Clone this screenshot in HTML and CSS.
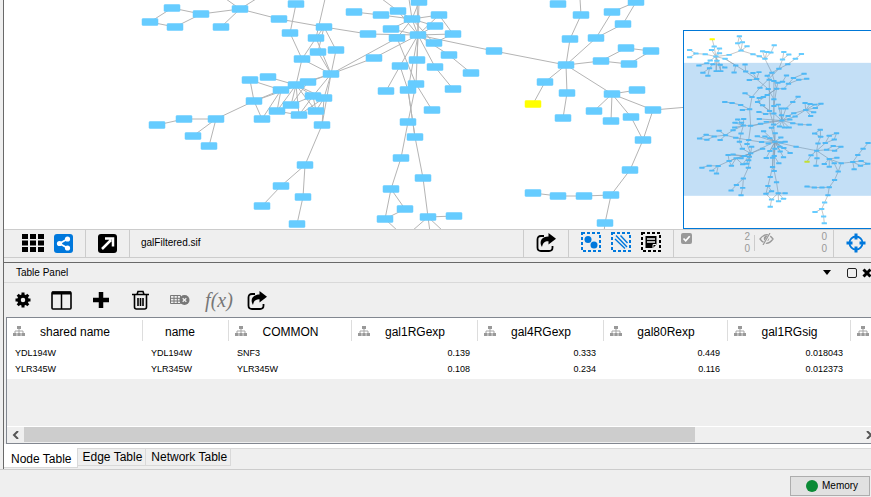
FILE: index.html
```html
<!DOCTYPE html>
<html lang="en">
<head>
<meta charset="utf-8">
<title>galFiltered.sif</title>
<link rel="stylesheet" href="styles.css">
</head>
<body>
<svg class="defs" aria-hidden="true">
  <symbol id="i-tree" viewBox="0 0 12 12"><path d="M6 3v7M2 8V6h8v2" fill="none" stroke="#a5a5a5"/><path d="M4 1h4v3H4zM0 8h3.6v3H0zM4.3 8h3.4v3H4.300zM8.400 8H12v3H8.400z" fill="#999"/></symbol>
  <symbol id="i-share" viewBox="0 0 20 19"><path d="M8 3H5Q1.500 3 1.500 6.500v8Q1.500 18 5 18h8q3.500 0 3.500-3.500V13" fill="none" stroke="currentColor" stroke-width="1.800"/><path d="M12.500 0 20 5.800l-7.500 5.700V8.200C9 8 7 9.500 6 14 2.500 8 6 3.500 12.500 3.400z" fill="currentColor"/></symbol>
</svg>

<main class="app">
  <section class="network" aria-label="Network view">
    <svg class="canvas" id="canvas"></svg>
    <div class="birdseye">
      <svg class="birdseye-map" id="birdseye" viewBox="11 16 564 594" preserveAspectRatio="xMinYMin slice"></svg>
    </div>
  </section>

  <div class="viewbar">
    <div class="group group-views">
      <button type="button" aria-label="Grid view"><svg width="22" height="18" viewBox="0 0 22 18"><path d="M0 0h6v5H0zM8 0h6v5H8zM16 0h6v5h-6zM0 6.500h6v5H0zM8 6.500h6v5H8zM16 6.500h6v5h-6zM0 13h6v5H0zM8 13h6v5H8zM16 13h6v5h-6z"/></svg></button>
      <button type="button" aria-label="Show view"><svg width="19" height="19" viewBox="0 0 19 19"><rect width="19" height="19" rx="3" fill="#0078dc"/><path d="M13.500 5 5.500 9.500l8 4.500" fill="none" stroke="#fff" stroke-width="1.800"/><g fill="#fff"><circle cx="13.500" cy="5" r="2.600"/><circle cx="5.500" cy="9.500" r="2.600"/><circle cx="13.500" cy="14" r="2.600"/></g></svg></button>
    </div>
    <div class="group group-detach">
      <button type="button" aria-label="Detach view"><svg width="19" height="19" viewBox="0 0 19 19"><rect width="19" height="19" rx="3"/><path d="M4 15 13 6M7 4.500h8v8" fill="none" stroke="#fff" stroke-width="2.500"/></svg></button>
    </div>
    <div class="group group-name">galFiltered.sif</div>
    <div class="group group-export">
      <button type="button" aria-label="Export"><svg width="20" height="19"><use href="#i-share"/></svg></button>
    </div>
    <div class="group group-select">
      <button type="button" aria-label="Node selection"><svg width="20" height="20" viewBox="0 0 20 20"><rect x="1" y="1" width="18" height="18" fill="none" stroke="#0078dc" stroke-width="2" stroke-dasharray="3 2"/><circle cx="7" cy="7.500" r="3.500" fill="#0078dc"/><circle cx="13" cy="13" r="3.500" fill="#0078dc"/></svg></button>
      <button type="button" aria-label="Edge selection"><svg width="20" height="20" viewBox="0 0 20 20"><rect x="1" y="1" width="18" height="18" fill="none" stroke="#0078dc" stroke-width="2" stroke-dasharray="3 2"/><path d="M4 7l10 9.500M5 3.500 16 15M9.500 3.500l7 7.500" fill="none" stroke="#0078dc" stroke-width="1.400"/></svg></button>
      <button type="button" aria-label="Annotation selection"><svg width="20" height="20" viewBox="0 0 20 20"><rect x="1" y="1" width="18" height="18" fill="none" stroke="#000" stroke-width="2" stroke-dasharray="3 2"/><path d="M4.500 4h11v8.500L12 16H4.500z"/><path d="M6 7h8M6 10h8" stroke="#efefef" stroke-width="1.300"/><path d="M12 16v-3.500h3.500" fill="none" stroke="#efefef"/></svg></button>
    </div>
    <div class="group group-counts">
      <svg class="count-icon" width="11" height="11" viewBox="0 0 11 11"><rect width="11" height="11" rx="2" fill="#999"/><path d="m2.500 5.500 2.200 2.300 4-4.500" fill="none" stroke="#fff" stroke-width="1.700"/></svg>
      <div class="count"><span>2</span><span>0</span></div>
      <i class="rule"></i>
      <svg class="count-icon" width="15" height="12" viewBox="0 0 15 12"><path d="M1 6q6.500-8.500 13 0-6.500 8.500-13 0z" fill="none" stroke="#999" stroke-width="1.300"/><circle cx="7.500" cy="5.500" r="2.700" fill="#999"/><path d="m11.500 0-7 12" stroke="#efefef" stroke-width="2.500"/><path d="M11 0 4 12" stroke="#999" stroke-width="1.200"/></svg>
      <div class="count count-hidden"><span>0</span><span>0</span></div>
    </div>
    <div class="group group-fit">
      <button type="button" aria-label="Birds eye view"><svg width="20" height="20" viewBox="0 0 20 20"><circle cx="10" cy="10" r="6.500" fill="none" stroke="#0078dc" stroke-width="1.800"/><path d="M10 .500v6M10 13.500v6M.500 10h6M13.500 10h6" stroke="#0078dc" stroke-width="3"/></svg></button>
    </div>
  </div>

  <section class="panel">
    <header class="panel-title">
      <h2>Table Panel</h2>
      <button type="button" aria-label="Menu"><svg width="8" height="5"><path d="M0 0h8L4 5z"/></svg></button>
      <button type="button" class="float" aria-label="Float"><svg width="10" height="10"><rect x=".5" y=".5" width="9" height="9" rx="1.500" fill="none" stroke="#222"/></svg></button>
      <button type="button" class="close" aria-label="Close"><svg width="10" height="10"><path d="m1.500 1.500 7 7m0-7-7 7" stroke="#000" stroke-width="3"/></svg></button>
    </header>

    <div class="tools">
      <button type="button" class="t-gear" aria-label="Table options"><svg width="16" height="16" viewBox="-8 -8 16 16"><circle r="4" fill="none" stroke="#000" stroke-width="3.500"/><path d="M0-7.500v3M0 4.500v3M-7.500 0h3M4.500 0h3M-5.300-5.300l2 2M5.300 5.300l-2-2M-5.300 5.300l2-2M5.300-5.300l-2 2" stroke="#000" stroke-width="3"/></svg></button>
      <button type="button" class="t-cols" aria-label="Show columns"><svg width="21" height="19" viewBox="0 0 21 19"><rect x="1" y="1" width="19" height="17" rx="1" fill="none" stroke="#000" stroke-width="1.600"/><path d="M1 2h19" stroke="#000" stroke-width="3"/><path d="M10.500 2v16" stroke="#000" stroke-width="1.500"/></svg></button>
      <button type="button" class="t-add" aria-label="Create column"><svg width="18" height="18"><path d="M9 1v16M1 9h16" stroke="#000" stroke-width="4.500"/></svg></button>
      <button type="button" class="t-trash" aria-label="Delete columns"><svg width="17" height="20" viewBox="0 0 17 20" fill="none" stroke="#000" stroke-width="1.600"><path d="M0 4.500h17M5 4.500l1-3h5l1 3M2.500 5v12q0 2 2 2h8q2 0 2-2V5M6 8v8M8.500 8v8M11 8v8"/></svg></button>
      <button type="button" class="t-table" aria-label="Delete table"><svg width="20" height="10" viewBox="0 0 20 10"><path d="M.5.500h10v8H.500zM.500 3.300h10M.500 6h10M4 .500v8M7.300.500v8" fill="none" stroke="#777"/><circle cx="14.500" cy="5" r="5" fill="#777"/><path d="m12.700 3.200 3.600 3.600m0-3.600-3.600 3.600" stroke="#efefef" stroke-width="1.300"/></svg></button>
      <button type="button" class="t-fx" aria-label="Function builder">f(x)</button>
      <button type="button" class="t-export" aria-label="Export table"><svg width="20" height="19"><use href="#i-share"/></svg></button>
    </div>

    <div class="grid">
      <table>
        <colgroup><col class="c-shared"><col class="c-name"><col class="c-common"><col class="c-exp"><col class="c-exp"><col class="c-r80"><col class="c-sig"><col class="c-rest"></colgroup>
        <thead>
          <tr>
            <th><svg><use href="#i-tree"/></svg>shared name</th>
            <th class="plain">name</th>
            <th><svg><use href="#i-tree"/></svg>COMMON</th>
            <th><svg><use href="#i-tree"/></svg>gal1RGexp</th>
            <th><svg><use href="#i-tree"/></svg>gal4RGexp</th>
            <th><svg><use href="#i-tree"/></svg>gal80Rexp</th>
            <th><svg><use href="#i-tree"/></svg>gal1RGsig</th>
            <th><svg><use href="#i-tree"/></svg></th>
          </tr>
        </thead>
        <tbody>
          <tr><td>YDL194W</td><td>YDL194W</td><td>SNF3</td><td class="num">0.139</td><td class="num">0.333</td><td class="num">0.449</td><td class="num">0.018043</td><td></td></tr>
          <tr><td>YLR345W</td><td>YLR345W</td><td>YLR345W</td><td class="num">0.108</td><td class="num">0.234</td><td class="num">0.116</td><td class="num">0.012373</td><td></td></tr>
        </tbody>
      </table>
      <div class="scroll">
        <svg width="7" height="8"><path d="M6 0 2 4l4 4" fill="none" stroke="#555" stroke-width="2"/></svg>
        <div class="track"><div class="thumb"></div></div>
        <svg class="next" width="7" height="8"><path d="m1 0 4 4-4 4" fill="none" stroke="#555" stroke-width="2"/></svg>
      </div>
    </div>

    <nav class="tabs">
      <button type="button" class="tab active">Node Table</button>
      <button type="button" class="tab">Edge Table</button>
      <button type="button" class="tab">Network Table</button>
    </nav>
  </section>
</main>

<footer class="status">
  <button type="button" class="memory"><i class="dot"></i>Memory</button>
</footer>
<script src="network.js"></script>
</body>
</html>
```
FILE: styles.css
```css
* { box-sizing: border-box; }
body {
  margin: 0;
  height: 100vh;
  display: flex;
  flex-direction: column;
  overflow: hidden;
  background: #efefef;
  color: #000;
  font: 10px/16px "Liberation Sans", Arial, sans-serif;
}
button {
  display: block;
  margin: 0;
  padding: 0;
  border: 0;
  background: none;
  color: inherit;
  font: inherit;
}
svg { display: block; }
.defs { position: absolute; width: 0; height: 0; }

.app {
  flex: 1;
  min-height: 0;
  display: flex;
  flex-direction: column;
  margin-left: 3px;
  border-left: 1px solid #696969;
}

/* network canvas and overview */
.network { position: relative; flex: 1; min-height: 0; overflow: hidden; background: #fff; }
.canvas { width: 100%; height: 100%; }
.edge { stroke: #b4b4b4; stroke-width: 1; fill: none; }
.node { fill: #66ccff; stroke: #66ccff; stroke-opacity: .5; }
.node.selected { fill: #ffff00; stroke: #ffff00; }
.birdseye {
  position: absolute;
  right: 0;
  bottom: 0;
  width: 188px;
  height: 199px;
  background: #fff;
  border: 1px solid #0078d7;
  border-right: 0;
}
.birdseye-map { width: 100%; height: 100%; }
.birdseye .edge { stroke: #aaa; stroke-width: 2; }
.birdseye .node { stroke: none; }
.viewport { fill: #0078d7; fill-opacity: .235; }

/* view toolbar */
.viewbar {
  display: flex;
  height: 29px;
  border-top: 1px solid #ccc;
  border-bottom: 1px solid #ccc;
}
.group { display: flex; align-items: center; border-right: 1px solid #ccc; }
.group-views { width: 82px; padding-left: 18px; padding-bottom: 1px; gap: 10px; }
.group-detach { width: 44px; padding-left: 12px; padding-bottom: 1px; }
.group-name { flex: 1; padding-left: 11px; padding-bottom: 1px; }
.group-export { width: 45px; padding-left: 12px; padding-bottom: 3px; }
.group-select { width: 105px; padding-left: 12px; padding-bottom: 3px; gap: 10px; }
.group-counts { width: 160px; padding-left: 7px; padding-bottom: 1px; color: #999; }
.group-fit { width: 37px; padding-left: 12px; padding-bottom: 1px; border-right: 0; }
.count-icon { align-self: flex-start; margin-top: 3px; }
.count { display: flex; flex-direction: column; width: 58px; text-align: right; line-height: 12px; }
.count-hidden { width: 53px; }
.rule { width: 1px; height: 16px; margin: 0 4px; background: #ccc; }

/* table panel */
.panel { margin-top: 4px; border-top: 1px solid #696969; }
.panel-title { display: flex; align-items: center; height: 20px; padding-left: 12px; border-bottom: 1px solid #d9d9d9; }
.panel-title h2 { flex: 1; margin: 0; font: inherit; }
.float { margin-left: 16px; }
.close { margin: 0 -1px 0 5px; }
.tools { display: flex; align-items: center; height: 34px; padding-left: 11px; }
.t-cols { margin-left: 20px; }
.t-add { margin-left: 20px; }
.t-trash { margin-left: 22px; }
.t-table { margin-left: 21px; }
.t-fx { margin-left: 14px; width: 30px; color: #777; font: italic 20px/20px "Liberation Serif", serif; }
.t-export { margin-left: 13px; }

.grid { height: 127px; margin-left: 2px; border: 1px solid #828790; border-right: 0; display: flex; flex-direction: column; overflow: hidden; }
table { table-layout: fixed; width: 1000px; flex: none; border-collapse: collapse; background: #fff; }
.c-shared { width: 136px; }
.c-name { width: 86px; }
.c-common { width: 123px; }
.c-exp { width: 126px; }
.c-r80 { width: 124px; }
.c-sig { width: 123px; }
th {
  position: relative;
  height: 27px;
  padding: 0;
  font-size: 12px;
  font-weight: 400;
  background: linear-gradient(#ddd, #ddd) right 2px / 1px 21px no-repeat;
}
th svg { position: absolute; left: 6px; top: 7px; width: 12px; height: 12px; }
th.plain { padding-right: 12px; }
td { height: 16px; padding: 0 8px; font-size: 9px; line-height: 16px; white-space: nowrap; }
tr:last-child td { height: 18px; padding-bottom: 2px; }
.num { text-align: right; }
.scroll { display: flex; align-items: center; height: 16px; margin: auto 0 1px; padding-left: 5px; border-top: 1px solid #fff; }
.track { flex: 1; height: 15px; margin-left: 5px; }
.thumb { width: 80%; height: 100%; background: #cdcdcd; }
.next { margin: 0 -2px 0 3px; }

.tabs { display: flex; align-items: flex-start; height: 25px; border-top: 4px solid #fff; box-shadow: inset 0 1px #d9d9d9; }
.tab { height: 18px; padding: 0 3px 0 5px; border: 1px solid #d9d9d9; border-left: 0; font-size: 12px; line-height: 16px; }
.tab.active { height: 20px; padding: 3px 5px 0 7px; border-top: 0; background: #fff; }

/* status bar */
.status { display: flex; justify-content: flex-end; height: 28px; padding: 6px 1px 1px; border-top: 1px solid #ccc; }
.memory { display: flex; align-items: center; gap: 4px; width: 80px; padding-left: 15px; border: 1px solid #adadad; background: #e1e1e1; }
.dot { width: 12px; height: 12px; border-radius: 50%; background: #0a8a35; }
```
FILE: network.js
```js
// Each network is a list of node centres, chains of connected node indexes,
// and loose edges that leave the visible area.
const main = {
  size: [16, 7],
  selected: [87],
  nodes: [
    [0,0],[172,8],[150,22],[175,27],[201,14],[240,9],[221,27],[279,19],[296,4],[290,33],[324,27],
    [316,38],[318,52],[336,50],[302,59],[331,74],[250,80],[268,77],[296,85],[308,82],[281,90],
    [313,96],[324,98],[254,101],[291,105],[277,111],[299,115],[316,111],[262,119],[322,125],[216,119],
    [184,119],[157,125],[193,136],[209,146],[305,165],[281,186],[262,206],[303,197],[297,224],
    [354,12],[381,15],[398,11],[419,2],[412,19],[439,15],[391,29],[435,26],[453,34],[368,34],
    [397,38],[418,35],[434,43],[449,55],[374,58],[494,51],[471,73],[417,60],[400,66],[435,67],
    [453,89],[416,84],[408,90],[386,91],[432,110],[408,122],[415,137],[401,158],[423,178],[391,189],
    [405,209],[385,219],[428,217],[454,216],
    [558,4],[581,15],[612,12],[636,2],[623,24],[596,38],[570,39],[566,65],[626,48],[651,51],
    [601,61],[629,64],[545,82],[533,104],[567,93],[563,118],[612,94],[637,90],[594,111],[611,121],
    [631,117],[653,110],[643,140],[630,170],[611,195],[533,193],[558,196],[584,196],[605,223]
  ],
  chains: [
    [1,2,3,4,1],[4,5,6],[5,7,10,49,51],[8,9,14,15,13,10,12,15],[10,11,14,18,17],[11,15],
    [15,18,20,16,23,20,28,23,30],[15,19,18,24],[15,21,24],[15,22,26],[15,29,35,36,37],[22,29],
    [18,25,26,21,27,22,18,27],[18,26],[19,20,25],[19,24],[19,23],[18,21],[30,31,32],[33,30,34],
    [35,38,39],[15,54,51],[15,50,44],[40,41,44,42],[44,45,51],[45,48,51],[44,47,51],[46,51],[46,44],
    [44,51,43,44,52,48],[51,52],[51,53,56],[51,55,81],[51,57],[51,58,63],[58,62,66],[51,59,60],
    [50,61,64],[51,62],[61,65,67,69,70,71,69],[62,66,68,72,73],[51,61],[42,51],
    [75,80,81,79,76,77,78,79],[81,84,82,83,85,84],[81,86,87],[81,88,89],[81,90,91],[92,90,93],
    [90,94,96,95,90],[96,97,98,101,100,99],[98,102]
  ],
  loose: [
    [240,9,226,-1],[240,9,256,-1],[316,38,325,-1],[398,11,382,-1],[412,19,409,-1],[418,35,417,-1],
    [581,15,580,-1],[653,110,700,106],[605,223,604,232],[385,219,399,232],[428,217,412,231],
    [428,217,430,232],[428,217,443,231]
  ]
};

const overview = {
  size: [16, 6],
  selected: [0, 211],
  nodes: [
    [96,41],[102,63],[28,73],[28,95],[47,84],[75,86],[107,93],[94,73],[118,69],[118,83],
    [135,100],[147,88],[183,75],[178,32],[173,53],[187,50],[201,62],[219,86],[238,92],[248,77],
    [261,79],[273,81],[283,59],[255,100],[312,79],[327,87],[308,102],[365,85],[347,100],[324,116],
    [297,130],[276,142],[90,105],[110,106],[80,113],[56,120],[98,116],[88,128],[68,142],[83,151],
    [120,118],[134,126],[108,137],[122,137],[167,120],[162,141],[195,117],[197,138],[219,143],[237,140],
    [230,161],[208,164],[262,151],[268,163],[282,167],[240,187],[265,191],[290,190],[294,172],[308,169],
    [320,150],[312,190],[326,175],[341,158],[357,163],[373,145],[381,160],[195,204],[216,215],[209,252],
    [187,254],[182,239],[156,233],[134,230],[233,230],[238,218],[250,215],[262,209],[282,222],[248,240],
    [282,242],[269,257],[237,260],[257,266],[282,265],[355,214],[339,230],[318,250],[295,238],[304,250],
    [305,270],[306,286],[238,281],[259,290],[242,296],[212,302],[190,301],[173,283],[191,281],[165,293],
    [184,293],[164,307],[159,315],[281,298],[275,308],[299,304],[314,307],[328,307],[330,283],[325,272],
    [342,264],[346,274],[378,254],[376,233],[391,236],[405,238],[424,235],[407,248],[402,261],[393,272],
    [339,294],[362,298],[388,299],[117,317],[136,330],[120,345],[102,334],[78,329],[58,340],[80,344],
    [167,338],[183,325],[178,350],[206,345],[201,357],[245,351],[285,350],[251,318],[286,324],[232,333],
    [255,334],[270,339],[303,337],[316,350],[303,352],[265,355],[300,365],[312,369],[331,384],[187,371],
    [215,365],[248,371],[212,385],[270,378],[285,371],[301,379],[311,397],[259,399],[278,398],[283,393],
    [297,415],[144,390],[159,388],[193,393],[208,395],[168,400],[183,400],[147,408],[206,406],[154,422],
    [188,418],[200,416],[114,423],[87,422],[65,428],[95,437],[109,446],[205,428],[190,461],[169,480],
    [153,497],[188,489],[183,511],[278,426],[283,438],[271,456],[290,472],[264,483],[275,499],[258,507],
    [295,505],[316,505],[275,524],[296,529],[311,522],[271,546],[349,365],[411,377],[415,355],[423,335],
    [405,325],[422,314],[437,354],[449,332],[471,324],[464,343],[441,374],[461,363],[484,365],[465,377],
    [394,391],[382,410],[412,400],[409,422],[449,402],[472,398],[434,417],[449,425],[464,415],[485,415],
    [476,440],[465,465],[449,487],[427,488],[404,488],[382,485],[445,511],[435,533],[426,553],[406,562],
    [432,575],[434,596],[520,411],[535,390],[551,371],[566,354],[545,408],[565,416],[543,422],[524,433]
  ],
  chains: [
    [0,1,6,5,4,2],[4,3],[7,6,8],[9,6,10,44,45],[6,11,12,14,13,15,12,16],[12,17,18,23,19],[20,23,21,22],
    [23,31,30,26,24],[26,25],[30,29,28,27],[6,32,34,35],[6,33,36,37,38],[37,39],[6,40,41],[6,42],[6,43],
    [33,42],[40,43],[10,47,46],[47,50,48],[51,50,49],[50,56,78,80,84,103,136],[31,52,53,54,58,59,60],
    [30,55,68,67],[68,69,70],[69,71,72,73],[69,95,133],[95,96,97],[98,96,99],[96,100],[57,61,62,63,65],
    [62,64,66],[31,57,80],[57,58],[57,74,79,81],[53,81,103],[54,84],[74,75,76,77,57],[74,81],
    [82,83,84,91,88],[85,86,87,91,89],[90,91,92],[93,91],[95,91],[94,95],[91,104,136],[91,105],[91,106],
    [91,107],[91,108],[91,109,110,112],[91,111,112,113],[112,114],[112,115,116,117,112],[118,112,119],
    [91,120,121,122],[101,96,102,124],[123,124,125],[124,126,127,128,129,126],[124,130,133,135,136],
    [96,131,132,149,152],[133,134,152],[137,136,138],[139,136,140],[141,136,142],[143,136,144],
    [145,136,146],[147,136,148],[150,152,136],[151,152,163],[153,136,154,159],[155,136,156],
    [157,136,158,183],[159,160],[136,183,184],[136,184,186,190],[190,191],[183,185,187,188],
    [187,189,192,195],[192,190,193],[188,189],[190,194],[161,163,162],[164,152,165,167,161],
    [166,152,168],[169,165,170],[171,152,170],[167,169],[152,167,172,173,174],[175,172,176],
    [152,177,178,179,180],[178,181,182],[136,196,197,198,199,200],[199,201],[200,201],
    [197,202,203,204,205,202],[197,206,207,208,209,206],[197,210,211],[197,212,213],[197,214,215],
    [216,214,217],[214,218,220,219,214],[219,232,233,234,235],[232,236,237,238,232,239],
    [220,221,222,223,224,225],[222,226,227,228,229],[228,230,231]
  ],
  loose: []
};

const NS = "http://www.w3.org/2000/svg";
function add(parent, tag, attrs) {
  const el = document.createElementNS(NS, tag);
  for (const key in attrs) el.setAttribute(key, attrs[key]);
  parent.appendChild(el);
}

function draw(svg, net, dx) {
  const g = document.createElementNS(NS, "g");
  g.setAttribute("transform", `translate(${dx} 0)`);
  for (const chain of net.chains) {
    add(g, "polyline", { class: "edge", points: chain.map(i => net.nodes[i].join()).join(" ") });
  }
  for (const [x1, y1, x2, y2] of net.loose) add(g, "line", { class: "edge", x1, y1, x2, y2 });
  const [w, h] = net.size;
  net.nodes.forEach(([x, y], i) => {
    if (!x) return;
    const cls = net.selected.includes(i) ? "node selected" : "node";
    add(g, "rect", { class: cls, x: x - w / 2, y: y - h / 2, width: w, height: h, rx: 1 });
  });
  svg.appendChild(g);
}

draw(document.getElementById("canvas"), main, -4);
const map = document.getElementById("birdseye");
draw(map, overview, 0);
add(map, "rect", { class: "viewport", x: 11, y: 112, width: 566, height: 401 });
```
